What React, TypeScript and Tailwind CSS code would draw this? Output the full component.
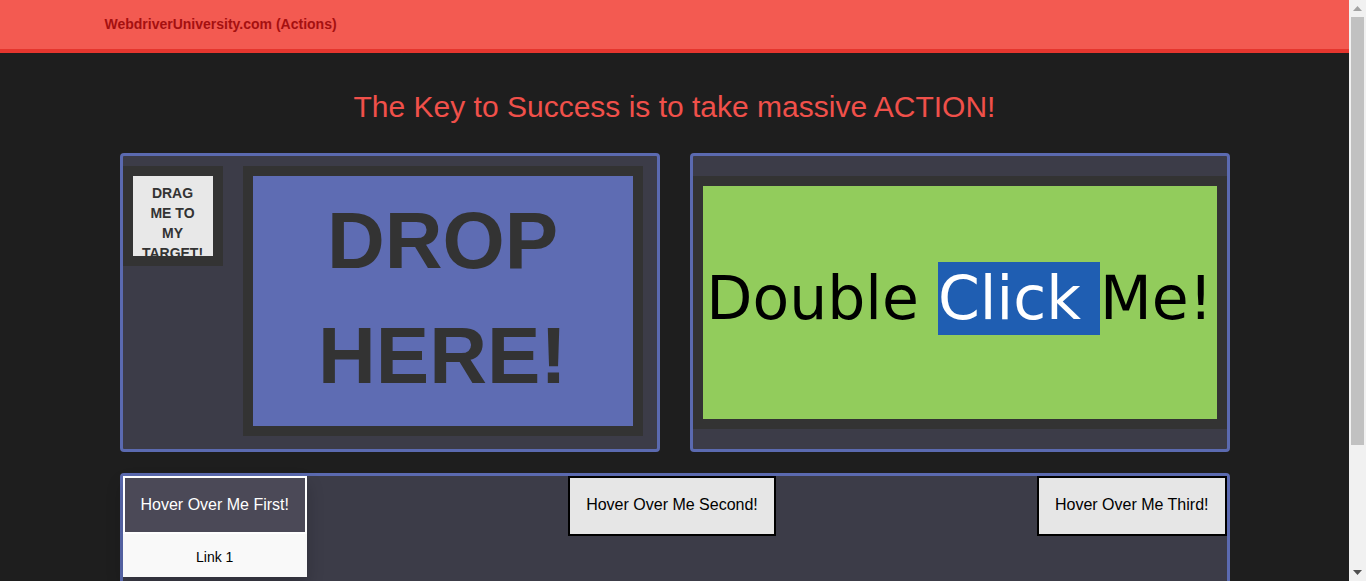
export default function App() {
  return (
    <div className="flex h-[581px] w-full overflow-hidden bg-[#1e1e1e]" style={{ fontFamily: '"Liberation Sans", Arial, sans-serif' }}>
      <div className="flex min-w-0 flex-1 flex-col">
        {/* navbar */}
        <nav className="h-[53px] shrink-0 border-b-4 border-[#e5362e] bg-[#f35a51]">
          <div className="mx-auto flex h-full w-[1140px] items-center">
            <span className="text-[14px] font-bold text-[#a51010]">WebdriverUniversity.com (Actions)</span>
          </div>
        </nav>

        <div className="mx-auto w-[1110px]">
          <h1 className="pt-[36px] text-center text-[30px] leading-[36px] text-[#f0504a]">
            The Key to Success is to take massive ACTION!
          </h1>

          <div className="mt-[28px] grid grid-cols-2 gap-[30px]">
            {/* drag & drop */}
            <div className="flex h-[299px] items-start gap-[20px] rounded-[4px] border-[3px] border-[#5b6ab0] bg-[#3c3c48]">
              <div className="mt-[10px] h-[100px] w-[100px] shrink-0 border-[10px] border-[#333333] bg-[#e8e8e8]">
                <p className="h-full overflow-hidden pt-[7px] text-center text-[14px] font-bold leading-[20px] text-[#333333]">
                  DRAG<br />ME TO<br />MY<br />TARGET!
                </p>
              </div>
              <div className="mt-[10px] h-[270px] w-[400px] shrink-0 border-[10px] border-[#333333] bg-[#5e6cb3]">
                <p className="pt-[7px] text-center text-[80px] font-bold leading-[115px] text-[#333333]">
                  DROP<br />HERE!
                </p>
              </div>
            </div>

            {/* double click */}
            <div className="h-[299px] rounded-[4px] border-[3px] border-[#5b6ab0] bg-[#3c3c48] py-[20px]">
              <div className="flex h-[253px] items-center justify-center border-[10px] border-[#333333] bg-[#92cc5c] pb-[8px]">
                <p className="whitespace-nowrap text-[60px] leading-[73px] text-black" style={{ fontFamily: '"DejaVu Sans", Verdana, sans-serif' }}>
                  Double <span className="inline-block bg-[#1f5eb2] text-white">Click&nbsp;</span>Me!
                </p>
              </div>
            </div>
          </div>

          {/* hover */}
          <div className="mt-[21px] flex h-[200px] items-start justify-between rounded-[4px] border-[3px] border-[#5b6ab0] bg-[#3c3c48]">
            <div className="flex flex-col shadow-[0_8px_16px_rgba(0,0,0,0.2)]">
              <button className="border-2 border-white bg-[#4b4957] px-4 py-[18px] text-[16px] leading-[18px] text-white" type="button">
                Hover Over Me First!
              </button>
              <div className="bg-[#f9f9f9] px-4 pb-[12px] pt-[15px] text-center text-[14px] leading-[16px] text-black">Link 1</div>
            </div>
            <button className="border-2 border-black bg-[#e6e6e6] px-4 pb-[20px] pt-[18px] text-[16px] leading-[18px] text-black" type="button">
              Hover Over Me Second!
            </button>
            <button className="border-2 border-black bg-[#e6e6e6] px-4 pb-[20px] pt-[18px] text-[16px] leading-[18px] text-black" type="button">
              Hover Over Me Third!
            </button>
          </div>
        </div>
      </div>

      {/* scrollbar */}
      <div className="flex w-[17px] shrink-0 flex-col items-center bg-[#f1f1f1]">
        <div className="flex h-[17px] items-center justify-center">
          <svg width="9" height="5" viewBox="0 0 9 5"><path d="M0 5 L4.5 0 L9 5 Z" fill="#a3a3a3" /></svg>
        </div>
        <div className="h-[428px] w-[13px] bg-[#c1c1c1]" />
        <div className="flex-1" />
        <div className="flex h-[17px] items-center justify-center">
          <svg width="9" height="5" viewBox="0 0 9 5"><path d="M0 0 L4.5 5 L9 0 Z" fill="#505050" /></svg>
        </div>
      </div>
    </div>
  );
}
